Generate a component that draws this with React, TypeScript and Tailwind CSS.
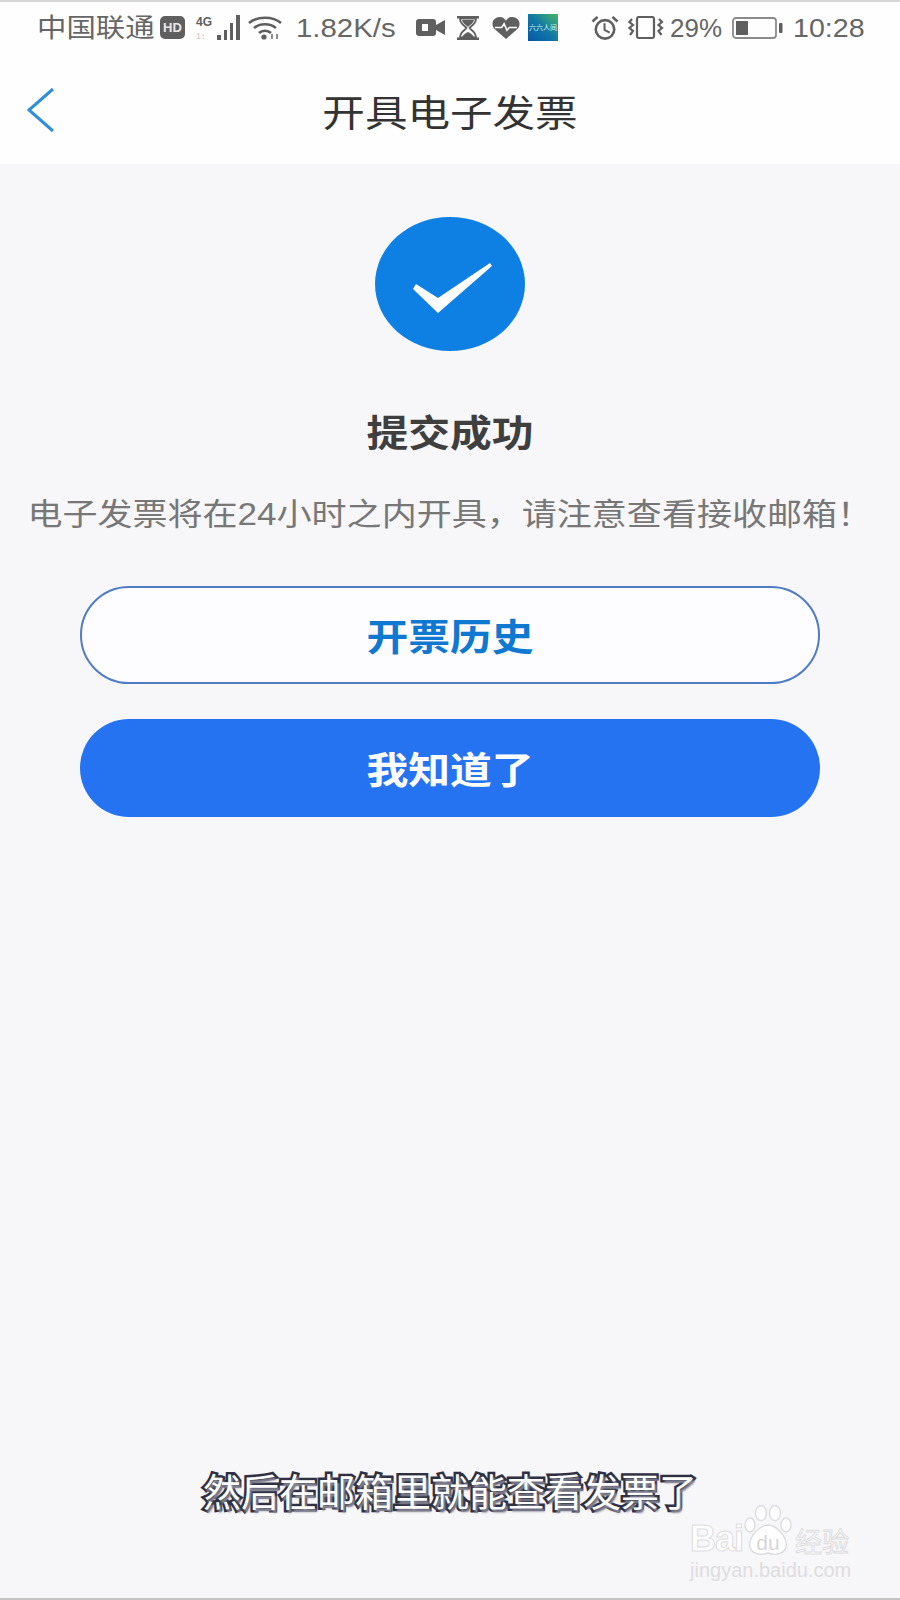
const gray = '#5f5f5f';

function LeftIcons() {
  return (
    <>
      <div className="ml-[7px] w-[25px] h-[23px] rounded-[5px] bg-[#5f5f5f] text-[#e8e8e8] flex items-center justify-center text-[13px] font-bold leading-none">HD</div>
      <svg className="ml-[10px]" width="46" height="26" viewBox="0 0 46 26">
        <text x="1" y="11" fontSize="12" fontWeight="700" fill={gray} fontFamily="Liberation Sans">4G</text>
        <text x="1" y="24" fontSize="9" fill="#c8c8c8" fontFamily="Liberation Sans">1↕</text>
        <rect x="22" y="20" width="4" height="5" fill={gray} />
        <rect x="29" y="15" width="3" height="10" fill={gray} />
        <rect x="35" y="8" width="3" height="17" fill={gray} />
        <rect x="41" y="0" width="4" height="25" fill={gray} />
      </svg>
      <svg className="ml-[7px]" width="34" height="24" viewBox="0 0 34 24" fill="none" stroke={gray} strokeWidth="2.6">
        <path d="M1 7 C 9 0, 25 0, 33 7" />
        <path d="M6 12 C 12 7, 22 7, 28 12" />
        <path d="M11 17 C 14 14, 20 14, 23 17" />
        <circle cx="16" cy="21" r="2.6" fill={gray} stroke="none" />
        <path d="M24 18v5M29 23v-5" strokeWidth="1.4" />
      </svg>
    </>
  );
}

function RightIcons() {
  return (
    <>
      <svg width="29" height="17" viewBox="0 0 29 17" className="ml-[16px]">
        <rect x="0" y="0" width="20" height="17" rx="3" fill={gray} />
        <rect x="6" y="5" width="6" height="7" fill="#fff" />
        <path d="M20 6 L29 1 V16 L20 11 Z" fill={gray} />
      </svg>
      <svg width="22" height="24" viewBox="0 0 22 24" className="ml-[12px]" fill={gray}>
        <rect x="0" y="0" width="22" height="2.5" />
        <rect x="0" y="21.5" width="22" height="2.5" />
        <path d="M3 2.5 H19 C19 8 14 10 12.5 12 C14 14 19 16 19 21.5 H3 C3 16 8 14 9.5 12 C8 10 3 8 3 2.5 Z" fill="none" stroke={gray} strokeWidth="1.8" />
        <path d="M5 4 H17 C16 8 12.5 9 11 11 C9.5 9 6 8 5 4 Z" />
        <path d="M5 21 C7 18 9 17 11 16 C13 17 15 18 17 21 Z" />
      </svg>
      <svg width="28" height="22" viewBox="0 0 29 23" className="ml-[13px]">
        <path d="M14.5 23 L2 12 C-2 6 2 0 8 0 C11 0 13 1.5 14.5 4 C16 1.5 18 0 21 0 C27 0 31 6 27 12 Z" fill={gray} />
        <path d="M3 11 H10 L12.5 7 L15.5 14 L18 11 H26" fill="none" stroke="#fff" strokeWidth="1.6" />
      </svg>
      <div className="ml-[8px] w-[30px] h-[27px] bg-linear-to-tr from-[#0b55a8] via-[#1278a4] to-[#4cb45c] flex items-center justify-center text-[7px] text-[#d8f4ea] leading-none whitespace-nowrap overflow-hidden">六六人间</div>
      <svg width="28" height="25" viewBox="0 0 30 27" className="ml-[33px]" fill="none" stroke={gray}>
        <circle cx="15" cy="15.5" r="10" strokeWidth="2.8" />
        <path d="M14.5 9 V16 L20 19" strokeWidth="2.2" />
        <path d="M1.5 7 L7 2 M28.5 7 L23 2" strokeWidth="2.8" />
      </svg>
      <svg width="36" height="23" viewBox="0 0 36 23" className="ml-[9px]" fill="none" stroke={gray}>
        <rect x="9" y="1" width="17" height="21" rx="2" strokeWidth="2.2" />
        <path d="M4 3 L1.5 6 L5 9 L1.5 12 L5 15 L2 19" strokeWidth="2.2" />
        <path d="M31 3 L34 6 L30.5 9 L34 12 L30.5 15 L33.5 19" strokeWidth="2.2" />
      </svg>
      <span className="ml-[6px] w-[53px]">29%</span>
      <svg width="51" height="22" viewBox="0 0 51 22" className="ml-[9px]" fill="none">
        <rect x="1" y="1" width="43" height="20" rx="3" stroke="#8a8a8a" strokeWidth="1.8" />
        <rect x="4" y="4" width="12" height="14" fill={gray} />
        <rect x="47" y="6" width="3.5" height="10" rx="1" fill={gray} />
      </svg>
      <span className="ml-[10px] inline-block origin-left scale-x-[1.1]">10:28</span>
    </>
  );
}

function Paw() {
  return (
    <svg width="48" height="52" viewBox="0 0 48 52" fill="#fff" stroke="#dcdbde" strokeWidth="1.4">
      <ellipse cx="6" cy="20" rx="5" ry="7" />
      <ellipse cx="17" cy="8" rx="5.5" ry="7.5" />
      <ellipse cx="31" cy="8" rx="5.5" ry="7.5" />
      <ellipse cx="42" cy="20" rx="5" ry="7" />
      <path d="M24 20 C32 20 44 32 42 42 C40 50 30 50 24 48 C18 50 8 50 6 42 C4 32 16 20 24 20 Z" />
    </svg>
  );
}

export default function App() {
  return (
    <div className="relative w-[900px] h-[1600px] flex flex-col bg-[#f7f6f9] border-t-2 border-t-[#d6d6d6] border-b-2 border-b-[#c4c4c4] font-['Liberation_Sans','Noto_Sans_CJK_SC',sans-serif] overflow-hidden">
      <header className="bg-[#fefefe] h-[162px] flex flex-col shrink-0">
        <div className="h-[51px] pl-[37px] flex items-center text-[26px] text-[#666] leading-none">
          <span className="w-[116px] inline-block origin-left scale-x-[1.13] whitespace-nowrap">中国联通</span>
          <LeftIcons />
          <span className="ml-[14px] w-[104px] inline-block origin-left scale-x-[1.13] whitespace-nowrap">1.82K/s</span>
          <RightIcons />
        </div>
        <div className="relative flex-1 pt-[11px] flex items-center justify-center">
          <svg className="absolute left-[26px] top-[34px]" width="30" height="46" viewBox="0 0 30 46" fill="none" stroke="#2f8fd6" strokeWidth="3">
            <path d="M27 2 L3 23 L27 44" />
          </svg>
          <h1 className="text-[37px] font-normal text-[#333] leading-none scale-x-[1.15]">开具电子发票</h1>
        </div>
      </header>

      <main className="flex flex-col items-center pt-[53px]">
        <div className="w-[150px] h-[134px] rounded-[50%] bg-[#0e80e4] flex items-center justify-center">
          <svg className="ml-[4px] mt-[8px]" width="80" height="51" viewBox="0 0 80 51" fill="#fff">
            <polygon points="4,21 26,35 78,0 80,3 26,50 1,26" />
          </svg>
        </div>
        <h2 className="mt-[65px] text-[37px] font-bold text-[#3f3f3f] leading-none scale-x-[1.13]">提交成功</h2>
        <p className="mt-[46px] text-[31px] text-[#777] leading-none whitespace-nowrap scale-x-[1.13]">电子发票将在24小时之内开具&#xFF0C;请注意查看接收邮箱&#xFF01;</p>
        <button className="mt-[56px] w-[740px] h-[98px] pt-[6px] rounded-full border-2 border-[#4f7cc4] bg-[#fdfcfe] text-[37px] font-bold text-[#0f78d0] leading-none">
          <span className="inline-block scale-x-[1.13]">开票历史</span>
        </button>
        <button className="mt-[35px] w-[740px] h-[98px] pt-[6px] rounded-full bg-[#2673f2] text-[37px] font-bold text-white leading-none">
          <span className="inline-block scale-x-[1.13]">我知道了</span>
        </button>
      </main>

      <div className="mt-auto mb-[86px] pl-[203px] text-[38px] text-white leading-none whitespace-nowrap [-webkit-text-stroke:5px_#2f3042] [paint-order:stroke_fill] [text-shadow:2px_3px_2px_#8a8a9a]">然后在邮箱里就能查看发票了</div>

      <div className="absolute left-[690px] top-[1503px] w-[165px] flex flex-col">
        <div className="flex items-end h-[52px]">
          <span className="w-[54px] text-[36px] font-bold tracking-[-1px] leading-none text-[#fdfdfd] [-webkit-text-stroke:1px_#dededf]">Bai</span>
          <div className="relative w-[48px] h-[52px] flex justify-center">
            <Paw />
            <span className="absolute bottom-[4px] text-[21px] text-[#d6d6d8] leading-none">du</span>
          </div>
          <span className="ml-[3px] text-[27px] leading-none text-[#fdfdfd] [-webkit-text-stroke:1px_#dededf]">经验</span>
        </div>
        <span className="mt-[3px] text-[20px] leading-none text-[#dedde0] whitespace-nowrap">jingyan.baidu.com</span>
      </div>
    </div>
  );
}
